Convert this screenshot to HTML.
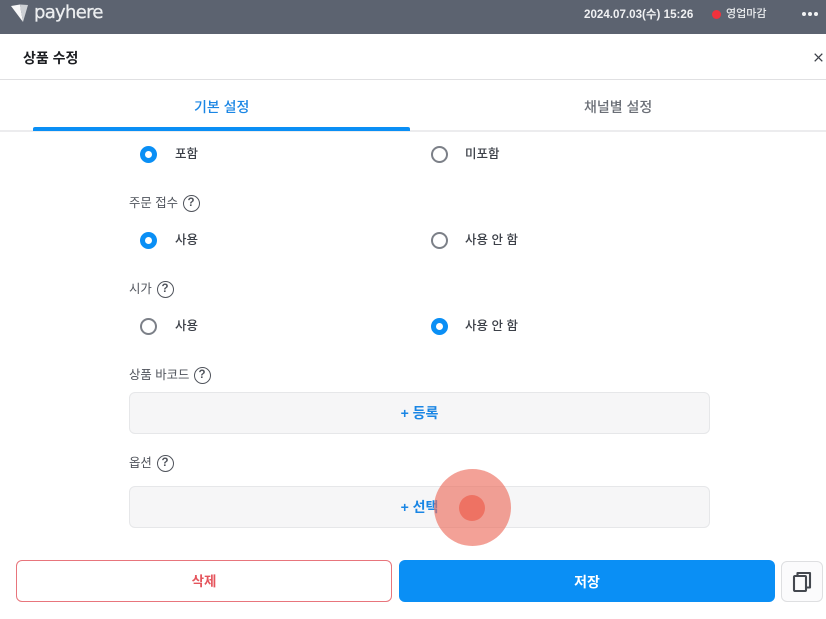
<!DOCTYPE html>
<html lang="ko"><head><meta charset="utf-8"><style>
html,body{margin:0;padding:0;width:826px;height:619px;overflow:hidden;background:#fff;font-family:"Liberation Sans","Noto Sans CJK KR",sans-serif}
.a{position:absolute;white-space:nowrap;line-height:1}
.top{position:absolute;left:0;top:0;width:826px;height:34px;background:#5c6370}
.r{position:absolute;width:17px;height:17px;box-sizing:border-box;border-radius:50%}
.on{border:5px solid #0a8ff5;background:#fff}
.off{border:2px solid #7c8088;background:#fff}
.t{font-size:12.5px;color:#3c4048;font-weight:500}
.l{font-size:12.4px;color:#50545c}
.q{position:absolute;width:17px;height:17px;box-sizing:border-box;border:1.8px solid #50545c;border-radius:50%;font-size:11.5px;font-weight:700;color:#50545c;text-align:center;line-height:14px}
.box{position:absolute;left:129px;width:581px;box-sizing:border-box;background:#f6f6f7;border:1px solid #e6e7e9;border-radius:6px;color:#1a86e4;font-size:14px;font-weight:700;text-align:center}
</style></head><body>
<div class="top"></div>
<svg class="a" style="left:10px;top:3px" width="20" height="20" viewBox="0 0 20 20"><path d="M1 3 L10 1.500 L11 8 L13 19 Z" fill="#f7f7f8"/><path d="M10 1.500 L18 2 L13 19 L11 8 Z" fill="#cdd0d5"/></svg>
<div class="a" style="left:34px;top:4px;font-size:18px;color:#eceef0;font-family:'DejaVu Sans',sans-serif;letter-spacing:-.7px;-webkit-text-stroke:.3px #eceef0">payhere</div>
<div class="a" style="left:584px;top:9px;font-size:11.6px;font-weight:700;color:#f0f1f3">2024.07.03(수) 15:26</div>
<div class="a" style="left:712px;top:10px;width:9px;height:9px;border-radius:50%;background:#f0323c"></div>
<div class="a" style="left:726px;top:9px;font-size:11px;color:#eceef0;font-weight:500">영업마감</div>
<div class="a" style="left:802px;top:12px;width:4px;height:4px;border-radius:50%;background:#f2f3f4;box-shadow:6px 0 #f2f3f4,12px 0 #f2f3f4"></div>

<div class="a" style="left:23px;top:51px;font-size:14px;font-weight:700;color:#1c1e22">상품 수정</div>
<svg class="a" style="left:814px;top:53px" width="9" height="9" viewBox="0 0 9 9"><path d="M.7 .7L8.300 8.300M8.300 .7L.7 8.300" stroke="#3c4048" stroke-width="1.300"/></svg>
<div class="a" style="left:0;top:79px;width:826px;height:1px;background:#e0e0e2"></div>
<div class="a" style="left:194px;top:100px;font-size:14px;color:#1a86e4;font-weight:500">기본 설정</div>
<div class="a" style="left:584px;top:100px;font-size:14px;color:#6a6e76;font-weight:500">채널별 설정</div>
<div class="a" style="left:0;top:130px;width:826px;height:2px;background:#ececee"></div>
<div class="a" style="left:33px;top:127px;width:377px;height:4px;background:#0a8ff5;border-radius:2px 2px 0 0"></div>

<div class="r on" style="left:140px;top:146px"></div><div class="a t" style="left:175px;top:148px">포함</div>
<div class="r off" style="left:430.500px;top:146px"></div><div class="a t" style="left:465px;top:148px">미포함</div>

<div class="a l" style="left:129px;top:197px">주문 접수</div><div class="q" style="left:182.500px;top:195px">?</div>
<div class="r on" style="left:140px;top:232px"></div><div class="a t" style="left:175px;top:234px">사용</div>
<div class="r off" style="left:430.500px;top:232px"></div><div class="a t" style="left:465px;top:234px">사용 안 함</div>

<div class="a l" style="left:129px;top:283px">시가</div><div class="q" style="left:156.500px;top:281px">?</div>
<div class="r off" style="left:140px;top:318px"></div><div class="a t" style="left:175px;top:320px">사용</div>
<div class="r on" style="left:430.500px;top:318px"></div><div class="a t" style="left:465px;top:320px">사용 안 함</div>

<div class="a l" style="left:129px;top:369px">상품 바코드</div><div class="q" style="left:193.500px;top:367px">?</div>
<div class="box" style="top:392px;height:42px;line-height:41px">+ 등록</div>

<div class="a l" style="left:129px;top:457px">옵션</div><div class="q" style="left:156.500px;top:455px">?</div>
<div class="box" style="top:486px;height:42px;line-height:41px">+ 선택</div>

<div class="a" style="left:433.500px;top:469px;width:77px;height:77px;border-radius:50%;background:rgba(236,110,95,.65)"></div>
<div class="a" style="left:459px;top:495px;width:26px;height:26px;border-radius:50%;background:#ee7263"></div>

<div class="a" style="left:16px;top:560px;width:376px;height:42px;box-sizing:border-box;border:1px solid #e8757c;border-radius:6px;background:#fff;color:#e5555d;font-size:13.500px;font-weight:700;text-align:center;line-height:42px">삭제</div>
<div class="a" style="left:399px;top:560px;width:376px;height:42px;border-radius:6px;background:#0a8ff5;color:#fff;font-size:14px;font-weight:700;text-align:center;line-height:44px">저장</div>
<div class="a" style="left:781px;top:561px;width:42px;height:41px;box-sizing:border-box;border:1px solid #dedfe1;border-radius:6px;background:#fbfbfc"></div>
<svg class="a" style="left:792px;top:571px" width="20" height="21" viewBox="0 0 20 21" fill="none" stroke="#44484f" stroke-width="2.100" stroke-linejoin="round"><rect x="2" y="5" width="12" height="15" rx="1"/><path d="M5.500 5V2H18V16.500H14"/></svg>
</body></html>
